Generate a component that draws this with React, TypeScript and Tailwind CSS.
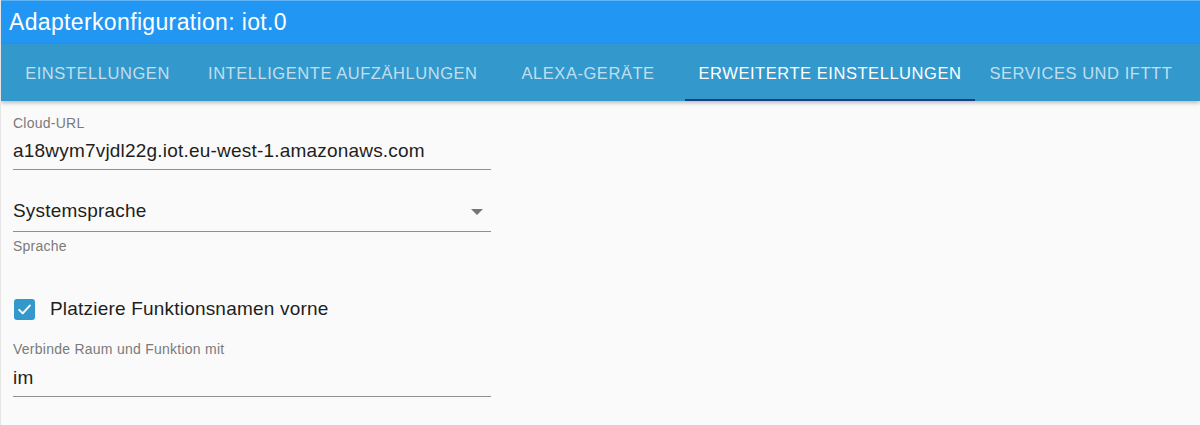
import React from "react";

const tabs = [
  { name: "EINSTELLUNGEN", active: false },
  { name: "INTELLIGENTE AUFZÄHLUNGEN", active: false },
  { name: "ALEXA-GERÄTE", active: false },
  { name: "ERWEITERTE EINSTELLUNGEN", active: true },
  { name: "SERVICES UND IFTTT", active: false },
];

function Label({ children }: { children: React.ReactNode }) {
  return <div className="text-[14px] leading-[16px] tracking-[0.25px] text-[#7a7a7a]">{children}</div>;
}

export default function App() {
  return (
    <div
      className="w-[1200px] h-[425px] overflow-hidden bg-[#fafafa] border-l border-[#e6e6e6] flex flex-col"
      style={{ fontFamily: '"Liberation Sans", Arial, Helvetica, sans-serif' }}
    >
      {/* title bar */}
      <header className="h-[44px] bg-[#2196f3] border-t border-[#5fb3f6] flex items-center px-[8px]">
        <h1 className="text-white text-[23px] leading-none tracking-[0.35px]">Adapterkonfiguration: iot.0</h1>
      </header>

      {/* tabs */}
      <nav className="relative z-10 h-[57px] bg-[#3399cc] flex shadow-[0_2px_4px_rgba(0,0,0,0.25)]">
        {tabs.map((t) => (
          <div
            key={t.name}
            className={`min-w-[193px] px-[14px] pt-[3px] flex items-center justify-center border-b-2 text-[16.5px] tracking-[0.55px] ${
              t.active ? "border-[#173f7c] text-white" : "border-transparent text-white/70"
            }`}
          >
            {t.name}
          </div>
        ))}
      </nav>

      {/* form */}
      <main className="flex-1 px-[12px] pt-[14px] w-[502px]">
        <Label>Cloud-URL</Label>
        <div className="mt-[9px] pb-[7px] border-b border-[#8f8f8f] text-[19px] leading-[22px] tracking-[0.2px] text-[#1e1e1e]">
          a18wym7vjdl22g.iot.eu-west-1.amazonaws.com
        </div>

        <div className="mt-[30px] pb-[9px] border-b border-[#8f8f8f] flex items-center justify-between">
          <span className="text-[19px] leading-[22px] tracking-[0.2px] text-[#1e1e1e]">Systemsprache</span>
          <svg width="12" height="6" viewBox="0 0 12 6" className="mr-[8px] mt-[2px]">
            <path d="M0 0 L12 0 L6 6 Z" fill="#757575" />
          </svg>
        </div>
        <div className="mt-[6px]">
          <Label>Sprache</Label>
        </div>

        <div className="mt-[44px] flex items-center gap-[15px]">
          <div className="w-[21px] h-[21px] ml-px rounded-[3px] bg-[#3399cc] flex items-center justify-center">
            <svg width="17" height="17" viewBox="0 0 24 24">
              <path d="M4.5 12.5 L9.5 17.5 L19.5 6.5" fill="none" stroke="white" strokeWidth="2.8" strokeLinecap="round" strokeLinejoin="round" />
            </svg>
          </div>
          <span className="text-[19px] leading-[22px] tracking-[0.2px] text-[#1e1e1e]">Platziere Funktionsnamen vorne</span>
        </div>

        <div className="mt-[21px]">
          <Label>Verbinde Raum und Funktion mit</Label>
        </div>
        <div className="mt-[10px] pb-[7px] border-b border-[#8f8f8f] text-[19px] leading-[22px] tracking-[0.2px] text-[#1e1e1e]">
          im
        </div>
      </main>
    </div>
  );
}
